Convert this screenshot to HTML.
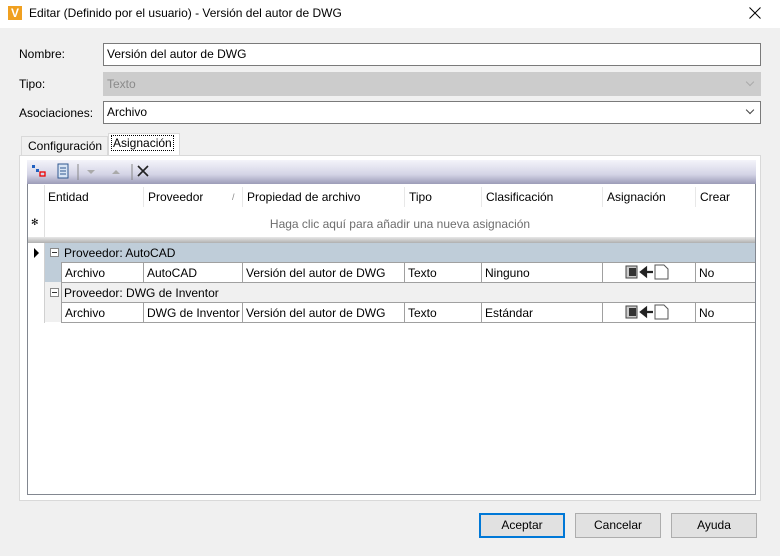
<!DOCTYPE html>
<html><head><meta charset="utf-8"><style>
*{box-sizing:border-box;margin:0;padding:0}
body{width:780px;height:556px;background:#f0f0f0;font-family:"Liberation Sans",Arial,sans-serif;font-size:12px;color:#000;position:relative;overflow:hidden}
.a{position:absolute}
.title{left:0;top:0;width:780px;height:28px;background:#fff}
.lbl{left:19px}
.fld{left:103px;width:658px;border:1px solid #7a7a7a;background:#fff;padding-left:3px;line-height:20px}
.chev{position:absolute;right:7px;top:4px;width:6px;height:6px;border-right:1px solid #444;border-bottom:1px solid #444;transform:rotate(45deg)}
.cell{position:absolute;white-space:nowrap;overflow:hidden;padding-left:3px;line-height:20px}
.btn{top:513px;height:25px;border:1px solid #adadad;background:#e1e1e1;text-align:center;line-height:23px}
</style></head><body>
<div class="a title">
 <div class="a" style="left:8px;top:6px;width:14px;height:14px;background:#f0a020;color:#fff;font-weight:bold;font-size:12px;line-height:14px;text-align:center">V</div>
 <div class="a" style="left:29px;top:6px;font-size:12px">Editar (Definido por el usuario) - Versión del autor de DWG</div>
 <svg class="a" style="left:202px;top:0" width="0" height="0"></svg>
 <svg class="a" style="left:749px;top:7px" width="12" height="12"><path d="M0.5 0.5l11 11M11.5 0.5l-11 11" stroke="#000" stroke-width="1"/></svg>
</div>
<div class="a lbl" style="top:47px">Nombre:</div>
<div class="a fld" style="top:43px;height:23px;line-height:21px">Versión del autor de DWG</div>
<div class="a lbl" style="top:77px">Tipo:</div>
<div class="a fld" style="top:72px;height:24px;background:#ccc;border-color:#ccc;color:#8a8a8a;line-height:22px">Texto<span class="chev" style="border-color:#aaa;top:6px"></span></div>
<div class="a lbl" style="top:106px">Asociaciones:</div>
<div class="a fld" style="top:101px;height:23px;line-height:21px">Archivo<span class="chev" style="top:5px"></span></div>
<!-- tabs -->
<div class="a" style="left:21px;top:136px;width:87px;height:20px;border:1px solid #d9d9d9;border-bottom:none;background:#f0f0f0;padding:2px 0 0 6px">Configuración</div>
<div class="a" style="left:108px;top:133px;width:72px;height:23px;border:1px solid #d9d9d9;border-bottom:none;background:#fff;padding:2px 0 0 3px"><span style="outline:1px dotted #000;padding:0 1px">Asignación</span></div>
<div class="a" style="left:19px;top:155px;width:742px;height:346px;background:#fff;border:1px solid #d9d9d9"></div>
<!-- grid -->
<div class="a" style="left:27px;top:160px;width:729px;height:335px;border:1px solid #828790;background:#fff;border-top:none"></div>
<div class="a" style="left:27px;top:160px;width:729px;height:24px;background:linear-gradient(#f4f4fa,#d4d4e6 60%,#9c9cb8)"></div>
<svg class="a" style="left:30px;top:163px" width="120" height="18">
 <rect x="2" y="2" width="3" height="3" fill="#2060c0"/><rect x="6" y="6" width="3" height="3" fill="#2060c0"/><rect x="10" y="9" width="5" height="4" fill="none" stroke="#e00" stroke-width="1.3"/>
 <rect x="28" y="1" width="10" height="14" fill="#d8e4f4" stroke="#305890"/><line x1="30" y1="5" x2="36" y2="5" stroke="#305890"/><line x1="30" y1="8" x2="36" y2="8" stroke="#305890"/><line x1="30" y1="11" x2="36" y2="11" stroke="#305890"/>
 <line x1="48" y1="1" x2="48" y2="17" stroke="#888"/>
 <path d="M57 7h8l-4 4z" fill="#aaa"/><path d="M82 11h8l-4-4z" fill="#aaa"/>
 <line x1="102" y1="1" x2="102" y2="17" stroke="#888"/>
 <path d="M108 3l10 10M118 3l-10 10" stroke="#222" stroke-width="1.6"/>
</svg>
<div class="cell" style="left:45px;top:187px">Entidad</div>
<div class="cell" style="left:145px;top:187px">Proveedor</div><div class="cell" style="left:229px;top:187px;color:#888;font-size:9px">/</div>
<div class="cell" style="left:244px;top:187px">Propiedad de archivo</div>
<div class="cell" style="left:406px;top:187px">Tipo</div>
<div class="cell" style="left:483px;top:187px">Clasificación</div>
<div class="cell" style="left:604px;top:187px">Asignación</div>
<div class="cell" style="left:697px;top:187px">Crear</div>
<div class="a" style="left:44px;top:185px;width:1px;height:52px;background:#e0e0e0"></div>
<div class="a" style="left:143px;top:187px;width:1px;height:20px;background:#e8e8e8"></div>
<div class="a" style="left:242px;top:187px;width:1px;height:20px;background:#e8e8e8"></div>
<div class="a" style="left:404px;top:187px;width:1px;height:20px;background:#e8e8e8"></div>
<div class="a" style="left:481px;top:187px;width:1px;height:20px;background:#e8e8e8"></div>
<div class="a" style="left:602px;top:187px;width:1px;height:20px;background:#e8e8e8"></div>
<div class="a" style="left:695px;top:187px;width:1px;height:20px;background:#e8e8e8"></div>
<div class="a" style="left:31px;top:217px;font-size:9px">✻</div>
<div class="a" style="left:45px;top:217px;width:710px;text-align:center;color:#6d6d6d">Haga clic aquí para añadir una nueva asignación</div>
<div class="a" style="left:28px;top:237px;width:727px;height:6px;background:linear-gradient(#e8e8e8,#b0b0b0)"></div>
<!-- group 1 -->
<div class="a" style="left:34px;top:248px;width:0;height:0;border-left:5px solid #000;border-top:5px solid transparent;border-bottom:5px solid transparent"></div>
<div class="a" style="left:44px;top:243px;width:1px;height:80px;background:#d0d0d0"></div>
<div class="a" style="left:45px;top:243px;width:710px;height:19px;background:#bfcdd9"></div>
<div class="a" style="left:45px;top:262px;width:16px;height:20px;background:#bfcdd9"></div>
<div class="a" style="left:45px;top:282px;width:710px;height:20px;background:#f0f0f0"></div>
<div class="a" style="left:45px;top:302px;width:16px;height:20px;background:#f0f0f0"></div>
<div class="a" style="left:50px;top:248px;width:9px;height:9px;border:1px solid #888;background:#fff"><div class="a" style="left:1px;top:3px;width:5px;height:1px;background:#333"></div></div>
<div class="a" style="left:50px;top:288px;width:9px;height:9px;border:1px solid #888;background:#fff"><div class="a" style="left:1px;top:3px;width:5px;height:1px;background:#333"></div></div>
<div class="cell" style="left:61px;top:243px">Proveedor: AutoCAD</div>
<div class="cell" style="left:61px;top:283px">Proveedor: DWG de Inventor</div>
<!-- data rows -->
<div class="a" style="left:61px;top:262px;width:694px;height:21px;border-top:1px solid #a0a0a0;border-bottom:1px solid #a0a0a0"></div>
<div class="a" style="left:61px;top:302px;width:694px;height:21px;border-top:1px solid #a0a0a0;border-bottom:1px solid #a0a0a0"></div>
<div class="a" style="left:61px;top:262px;width:1px;height:61px;background:#a0a0a0"></div>
<div class="a" style="left:143px;top:262px;width:1px;height:20px;background:#a0a0a0"></div><div class="a" style="left:143px;top:302px;width:1px;height:20px;background:#a0a0a0"></div>
<div class="a" style="left:242px;top:262px;width:1px;height:20px;background:#a0a0a0"></div><div class="a" style="left:242px;top:302px;width:1px;height:20px;background:#a0a0a0"></div>
<div class="a" style="left:404px;top:262px;width:1px;height:20px;background:#a0a0a0"></div><div class="a" style="left:404px;top:302px;width:1px;height:20px;background:#a0a0a0"></div>
<div class="a" style="left:481px;top:262px;width:1px;height:20px;background:#a0a0a0"></div><div class="a" style="left:481px;top:302px;width:1px;height:20px;background:#a0a0a0"></div>
<div class="a" style="left:602px;top:262px;width:1px;height:20px;background:#a0a0a0"></div><div class="a" style="left:602px;top:302px;width:1px;height:20px;background:#a0a0a0"></div>
<div class="a" style="left:695px;top:262px;width:1px;height:20px;background:#a0a0a0"></div><div class="a" style="left:695px;top:302px;width:1px;height:20px;background:#a0a0a0"></div>
<div class="cell" style="left:62px;top:263px">Archivo</div><div class="cell" style="left:144px;top:263px">AutoCAD</div><div class="cell" style="left:243px;top:263px">Versión del autor de DWG</div><div class="cell" style="left:405px;top:263px">Texto</div><div class="cell" style="left:482px;top:263px">Ninguno</div><div class="cell" style="left:696px;top:263px">No</div>
<div class="cell" style="left:62px;top:303px">Archivo</div><div class="cell" style="left:144px;top:303px">DWG de Inventor</div><div class="cell" style="left:243px;top:303px">Versión del autor de DWG</div><div class="cell" style="left:405px;top:303px">Texto</div><div class="cell" style="left:482px;top:303px">Estándar</div><div class="cell" style="left:696px;top:303px">No</div>
<svg class="a" style="left:625px;top:264px" width="50" height="16"><rect x="1" y="2" width="11" height="12" fill="#ccc" stroke="#444"/><rect x="4" y="4" width="7" height="8" fill="#333"/><path d="M16 8h12M16 8l5-4v8z" stroke="#222" stroke-width="2.2" fill="#222"/><path d="M30 1h9l4 4v10h-13z" fill="#fff" stroke="#555"/></svg>
<svg class="a" style="left:625px;top:304px" width="50" height="16"><rect x="1" y="2" width="11" height="12" fill="#ccc" stroke="#444"/><rect x="4" y="4" width="7" height="8" fill="#333"/><path d="M16 8h12M16 8l5-4v8z" stroke="#222" stroke-width="2.2" fill="#222"/><path d="M30 1h9l4 4v10h-13z" fill="#fff" stroke="#555"/></svg>
<!-- buttons -->
<div class="a btn" style="left:479px;width:86px;border:2px solid #0078d7;line-height:21px">Aceptar</div>
<div class="a btn" style="left:575px;width:86px">Cancelar</div>
<div class="a btn" style="left:671px;width:86px">Ayuda</div>
</body></html>
